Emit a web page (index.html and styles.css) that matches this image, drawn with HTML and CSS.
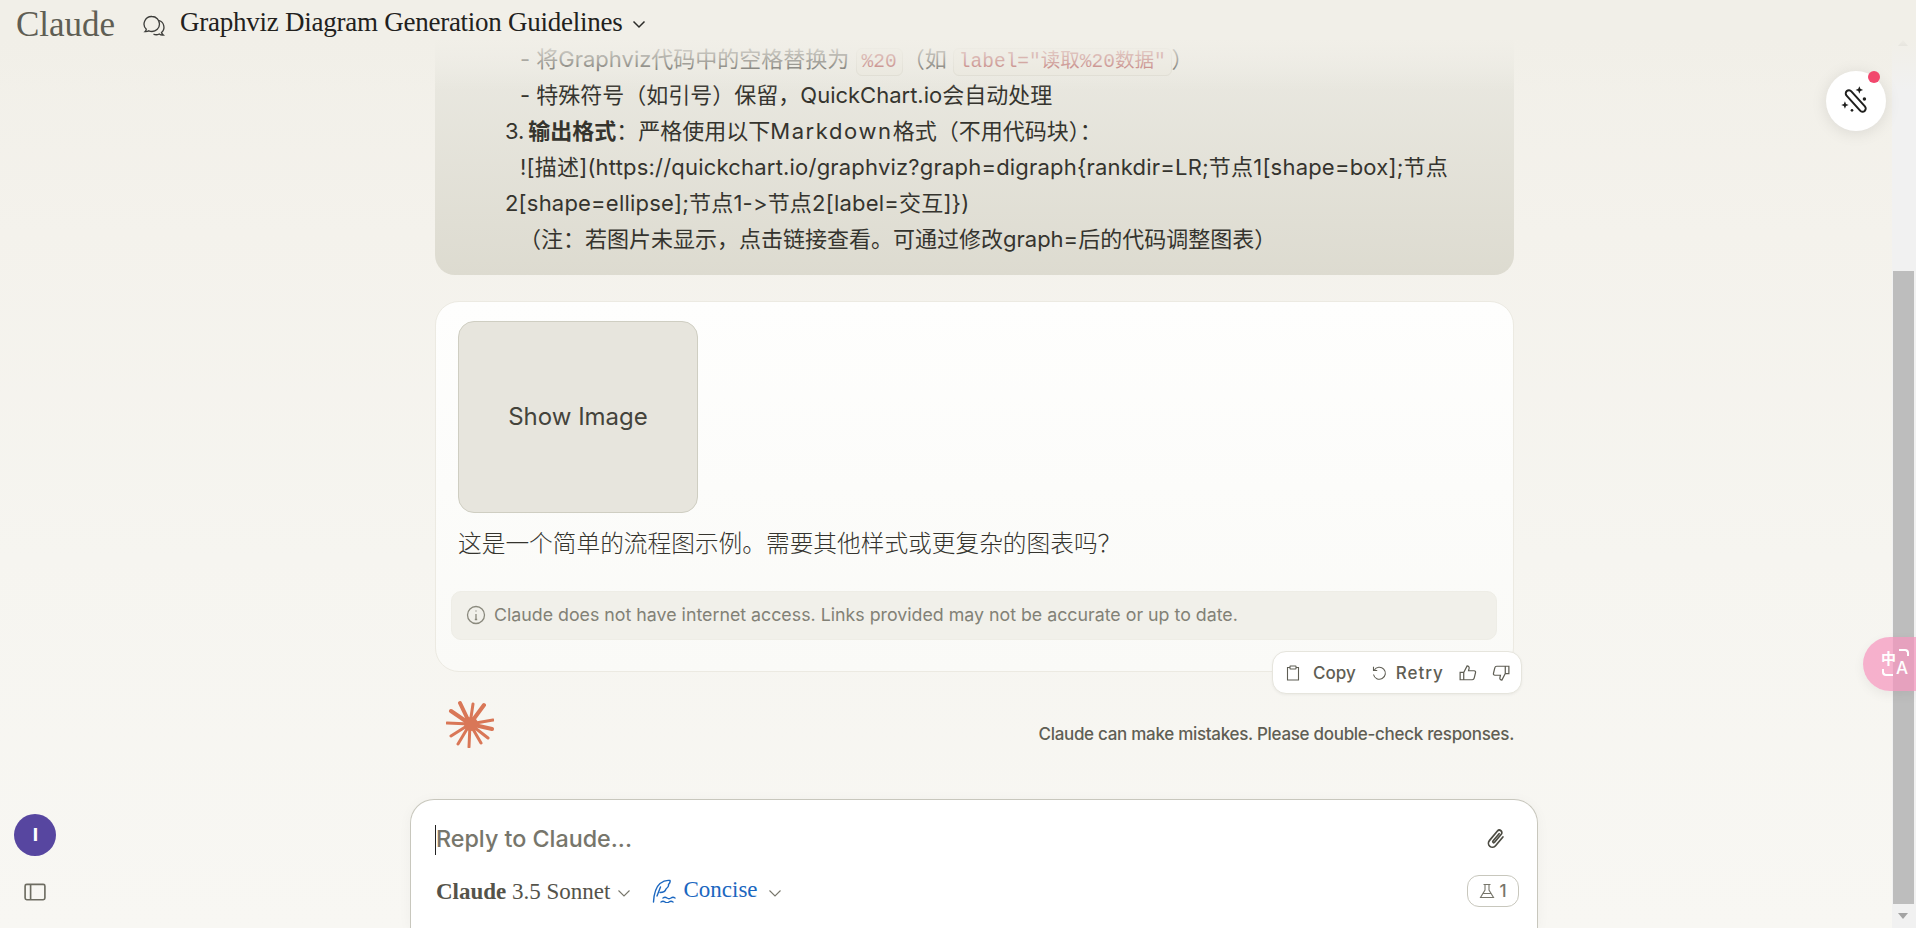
FILE: index.html
```html
<!DOCTYPE html>
<html lang="zh">
<head>
<meta charset="utf-8">
<title>Graphviz Diagram Generation Guidelines - Claude</title>
<link rel="stylesheet" href="styles.css">
</head>
<body>
<div class="app">
  <header class="topbar">
    <span class="logo">Claude</span>
    <svg class="chat-icon" viewBox="0 0 24 24" fill="none" stroke="#3d3d3a" stroke-width="1.300"><path d="M10 2.500a7.500 7.500 0 0 1 0 15 7.500 7.500 0 0 1-3.200-.7c-1 .7-2.300 1-3.800.9.800-.7 1.200-1.500 1.300-2.400A7.500 7.500 0 0 1 10 2.500z"/><path d="M17 6.500a7 7 0 0 1 2.500 12c.2 1 .8 1.800 1.800 2.500-1.600.2-3-.2-4-1a7 7 0 0 1-5.800.2"/></svg>
    <span class="title">Graphviz Diagram Generation Guidelines</span>
    <svg class="title-caret" viewBox="0 0 14 14" fill="none" stroke="#2b2b28" stroke-width="1.500"><path d="M1.500 4.500L7 10l5.500-5.500"/></svg>
  </header>

  <div class="page">
    <div class="rail">
      <div class="avatar">I</div>
      <svg class="panel-icon" viewBox="0 0 20 18" fill="none" stroke="#6e6d62" stroke-width="1.500"><rect x="1" y="2" width="18" height="14" rx="1.500"/><path d="M6 2v14"/></svg>
    </div>

    <main class="thread">
      <section class="user-bubble">
        <p class="line indent-2">- 将Graphviz代码中的空格替换为 <code>%20</code>（如 <code>label="读取%20数据"</code>）</p>
        <p class="line indent-2">- 特殊符号（如引号）保留，QuickChart.io会自动处理</p>
        <p class="line"><span class="num">3. </span><b>输出格式</b>：严格使用以下<span class="latin">Markdown</span>格式（不用代码块）：</p>
        <p class="line double"><span class="indent-1 latin-run">![描述](https://quickchart.io/graphviz?graph=digraph{rankdir=LR;节点1[shape=box];节点2[shape=ellipse];节点1-&gt;节点2[label=交互]})</span></p>
        <p class="line indent-3">（注：若图片未显示，点击链接查看。可通过修改graph=后的代码调整图表）</p>
      </section>

      <section class="answer">
        <div class="image-tile"><span class="tile-label">Show Image</span></div>
        <p class="answer-text">这是一个简单的流程图示例。需要其他样式或更复杂的图表吗？</p>
        <div class="notice">
          <svg class="notice-icon" viewBox="0 0 20 20" fill="none" stroke="#8a897d" stroke-width="1.300"><circle cx="10" cy="10" r="8.500"/><path d="M10 9v5.500M8.800 14.500h2.400M10 5.600v1"/></svg>
          <span>Claude does not have internet access. Links provided may not be accurate or up to date.</span>
        </div>
        <div class="actions">
          <svg class="act-icon" viewBox="0 0 16 16" fill="none" stroke="#5f5e54" stroke-width="1.100"><path d="M5 2.500H2.500V15h11V2.500H11"/><rect x="5" y="1" width="6" height="3" rx=".4"/></svg>
          <span class="act-label copy-label">Copy</span>
          <svg class="act-icon retry" viewBox="0 0 16 16" fill="none" stroke="#5f5e54" stroke-width="1.100"><path d="M3.200 5.200A6 6 0 1 1 2.500 9.500"/><path d="M2.500 1.800v3.700h3.700"/></svg>
          <span class="act-label retry-label">Retry</span>
          <svg class="act-icon like" viewBox="0 0 16 16" fill="none" stroke="#5f5e54" stroke-width="1.100"><path d="M1 7.500h3.200V14H1zM4.200 7.500l3-5.800c1.300 0 2 .9 1.800 2L8.500 6h5c.9 0 1.400.8 1.200 1.600l-1.200 5c-.2.900-.9 1.400-1.700 1.400H4.200"/></svg>
          <svg class="act-icon dislike" viewBox="0 0 16 16" fill="none" stroke="#5f5e54" stroke-width="1.100"><path d="M15 8.500h-3.200V2H15zM11.800 8.500l-3 5.800c-1.300 0-2-.9-1.800-2L7.500 10h-5c-.9 0-1.400-.8-1.200-1.600l1.200-5C2.700 2.500 3.400 2 4.200 2h7.600"/></svg>
        </div>
      </section>

      <div class="status-row">
        <svg class="spark" viewBox="0 0 48 48" fill="none" stroke="#d97757" stroke-linecap="round"><path stroke-width="4" d="M24 24L14 3M24 24L5 11M24 24L38 5M24 24L46 29"/><path stroke-width="3" d="M24 24L27 4M24 24L47 20M24 24L1 23M24 24L5 36M24 24L42 38M24 24L12 44M24 24L23 47M24 24L35 43"/><circle cx="25" cy="24" r="7" fill="#d97757" stroke="none"/></svg>
        <span class="disclaimer">Claude can make mistakes. Please double-check responses.</span>
      </div>
    </main>

    <section class="composer">
      <div class="input-row">
        <span class="caret"></span>
        <span class="placeholder">Reply to Claude...</span>
        <svg class="clip" viewBox="0 0 24 24" fill="none" stroke="#4c4b42" stroke-width="1.700" stroke-linecap="round"><g transform="rotate(40 12 12)"><path d="M16 6v11.500a4 4 0 0 1-8 0V5a2.500 2.500 0 0 1 5 0v10.500a1 1 0 0 1-2 0V6"/></g></svg>
      </div>
      <div class="tool-row">
        <span class="model"><b>Claude</b> 3.5 Sonnet</span>
        <svg class="small-caret" viewBox="0 0 14 10" fill="none" stroke="#77766b" stroke-width="1.100"><path d="M1.500 2.500L7 8l5.500-5.500"/></svg>
        <svg class="feather" viewBox="0 0 24 24" fill="none" stroke="#1b67c0" stroke-width="1.400" stroke-linecap="round"><path d="M1.500 23C2 14 4 8 8 4.500c3-2.300 7-3.500 10-3 .5 1.500-.5 3-1.500 4 .5 2-1 3.500-2.500 4.500-.5 2-3 3.500-6 3.500"/><path d="M8.500 8l-3.500 9M11 19c1.500-1 2.500-1 4 0s2.500 1 4 0 2.500-1 4 0M9 23c1.500-1 2.500-1 4 0s2.500 1 4 0 2.500-1 4 0"/></svg>
        <span class="style-name">Concise</span>
        <svg class="small-caret last-caret" viewBox="0 0 14 10" fill="none" stroke="#77766b" stroke-width="1.100"><path d="M1.500 2.500L7 8l5.500-5.500"/></svg>
        <span class="lab-chip">
          <svg class="flask" viewBox="0 0 16 16" fill="none" stroke="#77766b" stroke-width="1.100"><path d="M4.500 1.500h7M6 1.500V7l-4.500 7.500h13L10 7V1.500M4 10.500h8"/></svg>
          <span>1</span>
        </span>
      </div>
    </section>
  </div>

  <div class="scrollbar">
    <span class="arrow up"></span>
    <div class="track"><div class="scroll-thumb"></div></div>
    <span class="arrow down"></span>
  </div>

  <button class="magic" aria-label="Magic">
    <svg viewBox="0 0 24 24" fill="none" stroke="#1f1f1d" stroke-width="1.500"><rect x="-2.400" y="-10" width="4.800" height="20" rx="2.400" transform="translate(11.800 12) rotate(-42)"/><path fill="#1f1f1d" stroke="none" d="M14.500 .9l.8 2 2 .8-2 .8-.8 2-.8-2-2-.8 2-.8zM3.700 12.200l.8 2 2 .8-2 .8-.8 2-.8-2-2-.8 2-.8z"/><circle cx="18.300" cy="10.500" r="1.300" fill="#1f1f1d" stroke="none"/><circle cx="9" cy="19" r="1" fill="#1f1f1d" stroke="none"/></svg>
    <span class="magic-dot"></span>
  </button>

  <div class="translate-tab">
    <span class="tr-zh">中</span><span class="tr-en">A</span>
  </div>
</div>
</body>
</html>
```

FILE: styles.css
```css
* { box-sizing: border-box; }
html, body { margin: 0; height: 100%; overflow: hidden; }
body {
  background: #f6f5f0;
  color: #2f2e29;
  font-family: "Inter", "Noto Sans CJK SC", sans-serif;
  font-feature-settings: "calt" 0, "liga" 0;
}
.app { position: relative; display: flex; width: 1916px; height: 928px; overflow: hidden; }
.page {
  position: relative;
  flex: 1;
  min-width: 0;
  display: flex;
  flex-direction: column;
  height: 928px;
  overflow: hidden;
  background: linear-gradient(180deg, #f1efe8 0, #f4f2ec 25%, #f6f5f0 60%, #f8f7f3 100%);
}

/* Top bar lies over the scrolled thread and the scrollbar */
.topbar {
  position: absolute;
  inset: 0 0 auto 0;
  z-index: 3;
  height: 92px;
  display: flex;
  align-items: flex-start;
  padding: 8px 0 0 16px;
  pointer-events: none;
  background: linear-gradient(180deg, #f1efe8 38px, rgba(241, 239, 232, 0.6) 62px, rgba(241, 239, 232, 0) 90px);
}
.logo {
  font: 400 35px/34px "Liberation Serif", serif;
  color: #5f5e54;
  width: 126px;
}
.chat-icon { width: 24px; height: 24px; margin-top: 6px; flex: none; }
.title {
  margin-left: 14px;
  font: 400 27px/28px "Liberation Serif", serif;
  color: #22211d;
  letter-spacing: -0.25px;
}
.title-caret { width: 14px; height: 14px; margin: 9px 0 0 9px; }

/* Left rail */
.rail {
  position: absolute;
  left: 14px;
  top: 814px;
  width: 42px;
  display: flex;
  flex-direction: column;
  align-items: center;
  gap: 26px;
}
.avatar {
  width: 42px;
  height: 42px;
  padding-left: 1px;
  border-radius: 50%;
  background: #5746a0;
  color: #fff;
  font: 800 17px/42px "Inter", sans-serif;
  text-align: center;
}
.panel-icon { width: 22px; height: 20px; }

/* Thread */
.thread {
  flex: 1;
  min-height: 0;
  width: 1079px;
  margin-left: 435px;
  display: flex;
  flex-direction: column;
  justify-content: flex-end;
}
.user-bubble {
  flex: none;
  background: linear-gradient(180deg, #ecebe4 0, #dddbd0 100%);
  border-radius: 0 0 20px 20px;
  padding: 20px 62px 18px 70px;
  margin-bottom: 26px;
}
.line { margin: 0; height: 36px; line-height: 36px; font-size: 22px; color: #35342e; }
.line.double { height: 72px; }
.line b { font-weight: 700; }
.num { margin-right: -2.500px; }
.latin { letter-spacing: 1.600px; }
.latin-run { letter-spacing: 0.2px; }
.indent-1 { padding-left: 15px; }
.indent-2 { padding-left: 15px; }
.indent-3 { padding-left: 14px; }
code {
  font: 400 19.500px/1 "Liberation Mono", "Noto Sans CJK SC", monospace;
  color: #a8413f;
  background: #e8e6dc;
  border: 1px solid #d9d7cc;
  border-radius: 6px;
  padding: 2px 5px;
}
.answer {
  position: relative;
  flex: none;
  height: 371px;
  border: 1px solid #eceae2;
  border-radius: 24px;
  background: linear-gradient(180deg, #fefefd, #fafaf7);
  padding: 19px 16px 0 22px;
  margin-bottom: 23px;
}
.image-tile {
  width: 240px;
  height: 192px;
  display: flex;
  align-items: center;
  justify-content: center;
  background: #e7e5dd;
  border: 1px solid #cfcec2;
  border-radius: 16px;
  font-size: 24px;
  color: #44433b;
}
.tile-label { margin-bottom: 2px; }
.answer-text {
  margin: 11px 0 0;
  font: 300 23.700px/36px "Noto Sans CJK SC", serif;
  color: #35342e;
}
.notice {
  display: flex;
  align-items: center;
  gap: 8px;
  height: 49px;
  margin: 31px 0 0 -7px;
  padding: 0 14px 2px;
  background: #f1f0ea;
  border: 1px solid #eeede6;
  border-radius: 10px;
  font-size: 17.800px;
  color: #828176;
}
.notice-icon { width: 20px; height: 20px; }
.actions {
  position: absolute;
  right: -9px;
  bottom: -23px;
  height: 43px;
  width: 250px;
  display: flex;
  align-items: center;
  padding: 0 11px 0 12px;
  background: #fff;
  border: 1px solid #e6e5dd;
  border-radius: 14px;
  box-shadow: 0 1px 3px rgba(0, 0, 0, 0.05);
  font-size: 17px;
  font-weight: 500;
  color: #5f5e54;
}
.act-icon { width: 16px; height: 16px; flex: none; }
.copy-label { margin-left: 12px; }
.retry { margin-left: 15px; }
.retry-label { margin-left: 9px; letter-spacing: 1px; }
.like { margin-left: auto; width: 18px; height: 18px; }
.dislike { margin-left: 15px; width: 18px; height: 18px; }

.status-row {
  flex: none;
  height: 104px;
  display: flex;
  justify-content: space-between;
  align-items: flex-start;
  padding: 5px 0 0 11px;
}
.spark { width: 48px; height: 48px; }
.disclaimer { margin-top: 24px; font-size: 17px; font-weight: 500; color: #5f5e54; letter-spacing: -0.3px; }

/* Composer */
.composer {
  flex: none;
  width: 1128px;
  margin-left: 410px;
  height: 129px;
  background: #fff;
  border: 1px solid #c8c7bd;
  border-bottom: 0;
  border-radius: 24px 24px 0 0;
  padding: 24px 18px 0 24px;
  box-shadow: 0 2px 14px rgba(0, 0, 0, 0.04);
}
.input-row { display: flex; align-items: center; height: 32px; }
.caret { width: 1px; height: 30px; background: #222; }
.placeholder { flex: 1; margin-bottom: 4px; font-size: 23.300px; font-weight: 500; color: #77766b; }
.clip { width: 24px; height: 24px; margin: 0 11px 2px 0; }
.tool-row { display: flex; align-items: center; height: 38px; margin-top: 16px; }
.model { margin-left: 1px; font: 400 23px/1 "Liberation Serif", serif; color: #54534a; }
.model b { font-weight: 700; }
.small-caret { width: 14px; height: 10px; margin-left: 7px; margin-top: 4px; }
.feather { width: 24px; height: 24px; margin-left: 21px; }
.style-name { margin: 0 0 4px 7px; font: 400 23px/1 "Liberation Serif", serif; color: #1b67c0; }
.last-caret { margin-left: 10px; }
.lab-chip {
  margin-left: auto;
  display: flex;
  align-items: center;
  gap: 4px;
  height: 32px;
  width: 52px;
  justify-content: center;
  border: 1px solid #c8c7bd;
  border-radius: 12px;
  font-size: 17px;
  font-weight: 500;
  color: #77766b;
}
.flask { width: 16px; height: 16px; }

/* Floating widgets from browser extensions */
.magic {
  position: absolute;
  z-index: 4;
  left: 1826px;
  top: 71px;
  width: 60px;
  height: 60px;
  padding: 14px;
  border: 0;
  border-radius: 50%;
  background: #fff;
  box-shadow: 0 2px 16px rgba(0, 0, 0, 0.1);
}
.magic svg { width: 32px; height: 32px; display: block; }
.magic-dot {
  position: absolute;
  top: 0;
  right: 6px;
  width: 12px;
  height: 12px;
  border-radius: 50%;
  background: #f2476d;
}
.translate-tab {
  position: absolute;
  z-index: 5;
  left: 1863px;
  top: 637px;
  width: 53px;
  height: 54px;
  border-radius: 27px 0 0 27px;
  background: rgba(245, 150, 190, 0.72);
  color: #fff;
  box-shadow: 0 4px 12px rgba(0, 0, 0, 0.06);
  display: flex;
  padding: 12px 0 0 18px;
}
.tr-zh { position: relative; font: 700 15px/18px "Noto Sans CJK SC", sans-serif; }
.tr-zh::after {
  content: "";
  position: absolute;
  left: 1px;
  top: 20px;
  width: 9px;
  height: 5px;
  border-left: 2px solid #fff;
  border-bottom: 2px solid #fff;
  border-radius: 0 0 0 4px;
}
.tr-en { position: relative; margin-top: 9px; font: 500 17px/20px "Inter", sans-serif; }
.tr-en::before {
  content: "";
  position: absolute;
  left: 3px;
  top: -9px;
  width: 8px;
  height: 5px;
  border-right: 2px solid #fff;
  border-top: 2px solid #fff;
  border-radius: 0 4px 0 0;
}

/* Scrollbar begins under the top bar */
.scrollbar {
  flex: none;
  width: 24px;
  margin-top: 34px;
  display: flex;
  flex-direction: column;
  background: #f1f1f1;
}
.track { flex: 1; padding: 213px 2px 0 1px; }
.scroll-thumb { height: 633px; background: #bdbdbd; }
.arrow { flex: none; width: 24px; height: 24px; position: relative; }
.arrow::after {
  content: "";
  position: absolute;
  left: 6px;
  border-left: 5.500px solid transparent;
  border-right: 5.500px solid transparent;
}
.arrow.up::after { top: 6px; border-bottom: 6px solid #a3a3a3; }
.arrow.down::after { top: 9px; border-top: 6px solid #a3a3a3; }
```
